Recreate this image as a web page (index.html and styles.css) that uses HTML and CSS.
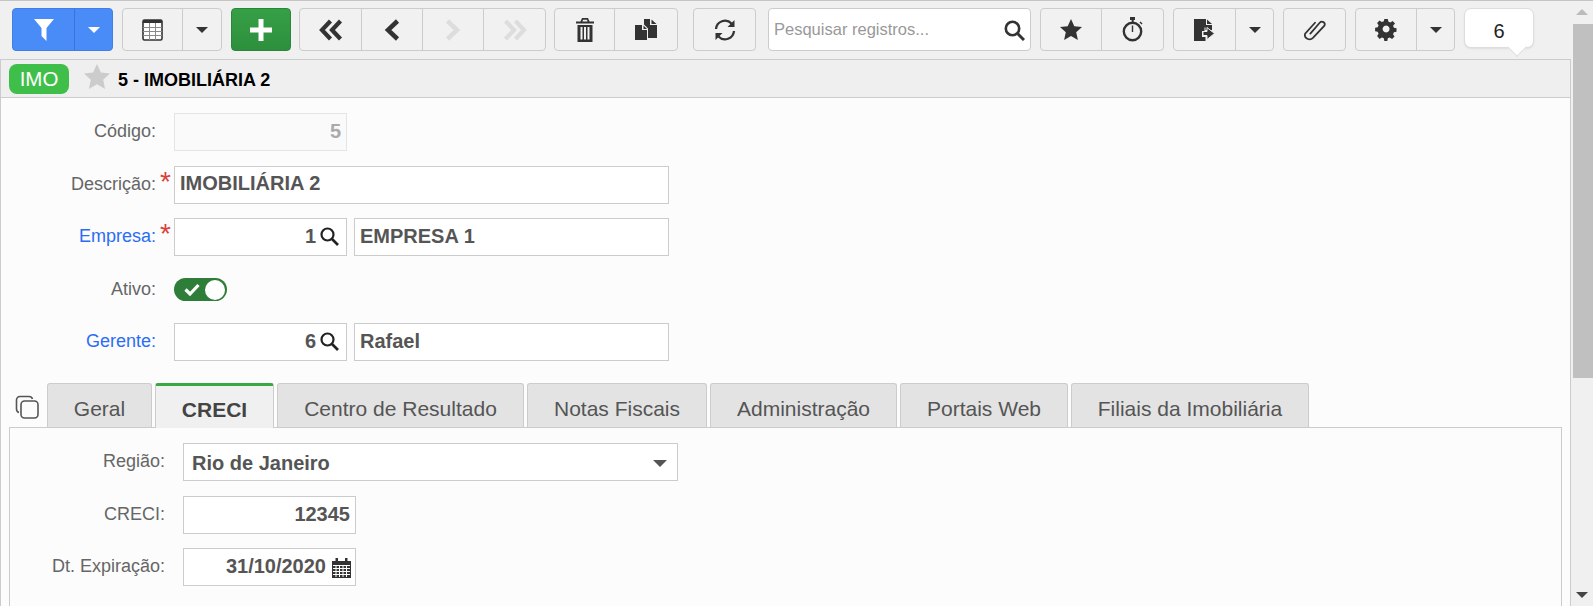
FILE: index.html
```html
<!DOCTYPE html>
<html lang="pt-BR">
<head>
<meta charset="utf-8">
<title>Imobiliária</title>
<link rel="stylesheet" href="styles.css">
</head>
<body>
<div class="app">
  <div class="main">
    <div class="toolbar">
      <div class="group blue">
        <button class="btn w62"><svg width="20" height="22" viewBox="0 0 20 22"><path fill="#fff" d="M0 0H20L12.5 9V22L7.5 17V9Z"/></svg></button>
        <button class="btn w37"><span class="caret white"></span></button>
      </div>
      <div class="group">
        <button class="btn w60"><svg width="21" height="22" viewBox="0 0 21 22"><rect x="1" y="1" width="19" height="20" rx="1.5" fill="#fff" stroke="#333" stroke-width="1.6"/><path fill="#333" d="M1 1h19v3H1z"/><path stroke="#8a8a8a" stroke-width="1" fill="none" d="M1 8.500h19M1 12.500h19M1 16.500h19M7.500 4v17M13.500 4v17"/></svg></button>
        <button class="btn w38"><span class="caret"></span></button>
      </div>
      <div class="group green">
        <button class="btn w58"><svg width="22" height="22" viewBox="0 0 22 22"><path fill="#fff" d="M8.500 0h5v8.500H22v5h-8.500V22h-5v-8.500H0v-5h8.500z"/></svg></button>
      </div>
      <div class="group narrow">
        <button class="btn w62"><svg width="24" height="22" viewBox="0 0 24 22"><path fill="none" stroke="#333" stroke-width="4.200" d="M11.500 2L3 11l8.500 9M21.500 2L13 11l8.500 9"/></svg></button>
        <button class="btn w61"><svg width="16" height="22" viewBox="0 0 16 22"><path fill="none" stroke="#333" stroke-width="4.500" d="M13.500 2L4 11l9.500 9"/></svg></button>
        <button class="btn w61"><svg width="16" height="22" viewBox="0 0 16 22"><path fill="none" stroke="#ddd" stroke-width="4.500" d="M2.500 2L12 11l-9.500 9"/></svg></button>
        <button class="btn w61"><svg width="24" height="22" viewBox="0 0 24 22"><path fill="none" stroke="#ddd" stroke-width="4.200" d="M2.500 2L11 11l-8.500 9M12.500 2L21 11l-8.500 9"/></svg></button>
      </div>
      <div class="group narrow">
        <button class="btn w60"><svg width="18" height="24" viewBox="0 0 18 24"><path fill="#333" d="M6 0h6l1.500 3.500H18v2H0v-2h4.500zM6.500 3.500h5L11 1.700H7zM1.500 7h15v17h-15zM4.500 9v12.500h2V9zM8 9v12.500h2V9zM11.500 9v12.500h2V9z" fill-rule="evenodd"/></svg></button>
        <button class="btn w62"><svg width="22" height="21" viewBox="0 0 22 21"><path fill="#333" d="M0 6h7v5h5v10H0zM8.500 6.500L12 10H8.500zM9 0h6v6h7v13h-9v-9.500L9 5.500zM16.500 0.500L21.500 5h-5z"/></svg></button>
      </div>
      <div class="group wide">
        <button class="btn w61"><svg width="22" height="22" viewBox="0 0 22 22"><g fill="none" stroke="#333" stroke-width="2.300"><path d="M2 10A9 9 0 0 1 17.500 4.500"/><path d="M20 12A9 9 0 0 1 4.500 17.500"/></g><path fill="#333" d="M20.500 1v7h-7zM1.500 21v-7h7z"/></svg></button>
      </div>
      <div class="search">
        <span class="placeholder">Pesquisar registros...</span>
        <svg class="glass" width="21" height="21" viewBox="0 0 21 21"><circle cx="8.500" cy="8.500" r="6.700" fill="none" stroke="#333" stroke-width="2.600"/><path stroke="#333" stroke-width="3" d="M13.500 13.500L20 20"/></svg>
      </div>
      <div class="group">
        <button class="btn w61"><svg width="22" height="21" viewBox="0 0 22 21"><path fill="#333" d="M11 0l3.300 7.200 7.700.8-5.800 5.200 1.700 7.800-6.900-4-6.900 4 1.700-7.800L0 8l7.700-.8z"/></svg></button>
        <button class="btn w61"><svg width="22" height="25" viewBox="0 0 22 25"><circle cx="10.500" cy="14.500" r="8.700" fill="none" stroke="#333" stroke-width="2.400"/><path fill="#333" d="M8 0h5v3H8zM9.700 3h2v3h-2zM9.800 8.500h1.400L11.200 15H9.800zM18.500 4.500l2 2-1 1-2-2z"/></svg></button>
      </div>
      <div class="group">
        <button class="btn w62"><svg width="21" height="22" viewBox="0 0 21 22"><path fill="#333" d="M0 0h12v6h6v5h-6.500V8.500l-1 0V12H8v6h3.500v4H0z"/><path fill="#333" d="M13 .5L18 5h-5z"/><path fill="#333" stroke="#f1f1f1" stroke-width="1" d="M9 12.500h4V8.500l7.500 6-7.500 6v-4H9z"/></svg></button>
        <button class="btn w37"><span class="caret"></span></button>
      </div>
      <div class="group">
        <button class="btn w61"><svg width="25" height="23" viewBox="0 0 24 22"><path fill="none" stroke="#333" stroke-width="1.700" stroke-linecap="round" d="M8 15L17 4.500c2-2.300 6-0.200 4.500 2.800L10.500 19c-3 3-9 .5-7.500-4L12.500 4.500"/></svg></button>
      </div>
      <div class="group">
        <button class="btn w61"><svg width="22" height="22" viewBox="0 0 22 22"><path fill="#333" fill-rule="evenodd" d="M9 0h4l.6 3 2.300 1 2.600-1.700 2.800 2.800L19 7.700l1 2.300 3 .6v4l-3 .6-1 2.300 1.700 2.600-2.800 2.800-2.600-1.700-2.300 1-.6 3H9l-.6-3-2.300-1-2.600 1.700L.7 19.500 2.400 17l-1-2.300-3-.6v-4l3-.6 1-2.300L.7 4.600l2.800-2.800L6.100 3.500 8.400 2.500zM11 7.500a4 4 0 1 0 .01 0z" transform="translate(1.500 0) scale(.87)"/></svg></button>
        <button class="btn w37"><span class="caret"></span></button>
      </div>
      <div class="badge">6</div>
    </div>

    <div class="panel">
      <div class="titlebar">
        <span class="tag">IMO</span>
        <svg class="fav" width="26" height="25" viewBox="0 0 26 25"><path fill="#ccc" d="M13 0l3.900 8.500 9.100 1-6.800 6.200 1.900 9.300-8.100-4.700-8.100 4.700 1.900-9.300L0 9.500l9.100-1z"/></svg>
        <span class="title">5 - IMOBILIÁRIA 2</span>
      </div>

      <div class="form">
        <div class="row">
          <label class="label">Código:</label><span class="req"></span>
          <div class="field w173 disabled num">5</div>
        </div>
        <div class="row">
          <label class="label">Descrição:</label><span class="req">*</span>
          <div class="field w495">IMOBILIÁRIA 2</div>
        </div>
        <div class="row">
          <label class="label link">Empresa:</label><span class="req">*</span>
          <div class="field w173 num lookup">1<svg class="lens" width="19" height="19" viewBox="0 0 19 19"><circle cx="7.500" cy="7.500" r="6" fill="none" stroke="#222" stroke-width="2.200"/><path stroke="#222" stroke-width="2.600" d="M12 12l6 6"/></svg></div>
          <div class="field w315">EMPRESA 1</div>
        </div>
        <div class="row">
          <label class="label">Ativo:</label><span class="req"></span>
          <div class="toggle"><svg width="16" height="13" viewBox="0 0 16 13"><path fill="none" stroke="#fff" stroke-width="3.200" d="M1.500 6.500l4.500 4.500 8.500-9"/></svg><span class="knob"></span></div>
        </div>
        <div class="row">
          <label class="label link">Gerente:</label><span class="req"></span>
          <div class="field w173 num lookup">6<svg class="lens" width="19" height="19" viewBox="0 0 19 19"><circle cx="7.500" cy="7.500" r="6" fill="none" stroke="#222" stroke-width="2.200"/><path stroke="#222" stroke-width="2.600" d="M12 12l6 6"/></svg></div>
          <div class="field w315">Rafael</div>
        </div>
      </div>

      <div class="tabs">
        <svg class="copy" width="24" height="24" viewBox="0 0 24 24"><g fill="none" stroke="#555" stroke-width="1.600"><path d="M4 17.500C2.200 17 1.500 16 1.500 14V5C1.500 3 3 1.500 5 1.500h9c2 0 3 .7 3.500 2.500"/><rect x="6" y="6" width="17" height="17" rx="3.500"/></g></svg>
        <div class="tab t105">Geral</div>
        <div class="tab active t119">CRECI</div>
        <div class="tab t247">Centro de Resultado</div>
        <div class="tab t180">Notas Fiscais</div>
        <div class="tab t187">Administração</div>
        <div class="tab t168">Portais Web</div>
        <div class="tab t238">Filiais da Imobiliária</div>
      </div>
      <div class="tabpane">
        <div class="row sub">
          <label class="label">Região:</label>
          <div class="field w495 select">Rio de Janeiro<span class="caret grey"></span></div>
        </div>
        <div class="row sub">
          <label class="label">CRECI:</label>
          <div class="field w173 num">12345</div>
        </div>
        <div class="row sub">
          <label class="label">Dt. Expiração:</label>
          <div class="field w173 num date">31/10/2020<svg class="lens cal" width="19" height="20" viewBox="0 0 19 20"><path fill="#333" d="M0 3h3.500V0h2.500v3h7V0h2.500v3H19v17H0z"/><path stroke="#fff" stroke-width="1" fill="none" d="M1 7.500h17M1 10.500h17M1 13.500h17M1 16.500h17M4 7v12M7.500 7v12M11 7v12M14.500 7v12"/></svg></div>
        </div>
      </div>
    </div>
  </div>
  <div class="scrollbar">
    <span class="arrow up"></span>
    <span class="thumb"></span>
    <span class="arrow down"></span>
  </div>
</div>
</body>
</html>
```

FILE: styles.css
```css
* { box-sizing: border-box; }
html, body { margin: 0; height: 100%; overflow: hidden; }
body { font-family: "Liberation Sans", Arial, sans-serif; background: #f0f0f0; color: #555; }

.app { display: flex; height: 606px; border-top: 1px solid #c4c4c4; }
.main { width: 1571px; flex: none; display: flex; flex-direction: column; }

.toolbar { height: 58px; flex: none; display: flex; align-items: flex-start; gap: 9px; padding: 7px 0 0 12px; position: relative; }
.group { display: flex; height: 43px; border: 1px solid #ccc; border-radius: 4px; background: #f1f1f1; flex: none; overflow: hidden; }
.group.narrow { margin-left: -1px; }
.group.wide { margin-left: 6px; }
.btn { height: 100%; padding: 0; margin: 0; border: 0; border-right: 1px solid #ccc; background: transparent; display: flex; align-items: center; justify-content: center; flex: none; }
.btn:last-child { border-right: 0; }
.w37 { width: 37px; } .w38 { width: 38px; } .w58 { width: 58px; } .w60 { width: 60px; } .w61 { width: 61px; } .w62 { width: 62px; }
.blue { background: #4a8cf7; border-color: #3f7fe6; }
.blue .btn { border-right-color: #3a74d6; }
.green { background: linear-gradient(#36a046, #2d8f3d); border-color: #2a8639; }
.caret { width: 0; height: 0; border-left: 6px solid transparent; border-right: 6px solid transparent; border-top: 6px solid #333; display: block; }
.caret.white { border-top-color: #fff; }
.caret.grey { border-top-color: #555; border-left-width: 7px; border-right-width: 7px; border-top-width: 7px; }

.search { width: 263px; height: 43px; flex: none; margin-left: 3px; background: #fff; border: 1px solid #ccc; border-radius: 4px; display: flex; align-items: center; justify-content: space-between; padding: 0 5px; }
.placeholder { font-size: 16.500px; color: #999; }
.glass { display: block; margin-top: 2px; }

.badge { width: 70px; height: 40px; flex: none; background: #fff; border: 1px solid #ddd; border-radius: 7px; font-size: 20px; color: #222; text-align: center; line-height: 44px; position: relative; box-shadow: 0 1px 2px rgba(0,0,0,.08); }
.badge::after { content: ""; position: absolute; left: 45px; bottom: -7px; width: 13px; height: 13px; background: #fff; border-right: 1px solid #ddd; border-bottom: 1px solid #ddd; transform: rotate(45deg); }

.panel { flex: 1; min-height: 0; border: 1px solid #ccc; border-bottom: 0; background: #fcfcfc; overflow: hidden; }
.titlebar { height: 38px; background: #efefef; border-bottom: 1px solid #ccc; display: flex; align-items: center; padding-left: 8px; }
.tag { width: 60px; height: 30px; background: #3fbf4a; border-radius: 8px; color: #fff; font-size: 20.500px; line-height: 30px; text-align: center; }
.fav { margin-left: 15px; margin-top: -4px; }
.title { margin-left: 8px; font-size: 18px; font-weight: 700; color: #000; margin-top: 4px; }

.form { display: flex; flex-direction: column; gap: 14.500px; padding: 15px 0 0 0; }
.form .field { padding-bottom: 2px; }
.row { display: flex; height: 38px; align-items: center; }
.label { width: 155px; flex: none; text-align: right; font-size: 18px; color: #666; margin-top: -1px; }
.label.link { color: #2a6df4; }
.req { width: 18px; flex: none; color: #d9403a; font-size: 28px; font-weight: 400; line-height: 1; height: 28px; padding-left: 4px; margin-top: -6px; }
.field { height: 38px; background: #fff; border: 1px solid #ccc; font-size: 20px; font-weight: 700; color: #555; display: flex; align-items: center; padding: 0 5px; flex: none; }
.w173 { width: 173px; }
.w495 { width: 495px; }
.w315 { width: 315px; margin-left: 7px; }
.num { justify-content: flex-end; }
.lookup { padding-right: 7px; }
.disabled { background: #fafafa; border-color: #e4e4e4; color: #aaa; }
.lens { margin-left: 4px; flex: none; }
.lens.cal { margin-left: 6px; }
.date { padding-right: 4px; padding-bottom: 2px; }
.date .cal { margin-top: 3px; }
.toggle { width: 53px; height: 23px; border-radius: 12px; background: #2e7d39; display: flex; align-items: center; justify-content: space-between; padding: 0 2px 0 10px; }
.knob { width: 20px; height: 20px; border-radius: 50%; background: #fff; }

.tabs { display: flex; align-items: flex-end; height: 45px; margin-top: 21px; padding-left: 14px; position: relative; }
.copy { margin-right: 8px; align-self: center; margin-top: 4px; }
.tab { height: 44px; flex: none; margin-right: 3px; background: #e3e3e3; border: 1px solid #ccc; border-bottom: 0; border-radius: 3px 3px 0 0; font-size: 21px; color: #555; text-align: center; line-height: 50px; }
.tab.active { background: #f0f0f0; border-top: 3px solid #38a845; font-weight: 700; color: #444; line-height: 48px; margin-bottom: -1px; height: 45px; position: relative; z-index: 1; }
.t105 { width: 105px; } .t119 { width: 119px; } .t247 { width: 247px; } .t180 { width: 180px; } .t187 { width: 187px; } .t168 { width: 168px; } .t238 { width: 238px; }
.tabpane { margin: 0 8px; height: 300px; border: 1px solid #ccc; background: #fcfcfc; padding: 15px 0 0 0; display: flex; flex-direction: column; gap: 14.500px; }
.row.sub .label { margin-right: 18px; }
.select { justify-content: space-between; padding: 2px 10px 0 8px; }

.scrollbar { flex: 1; background: #f0f0f0; display: flex; flex-direction: column; align-items: stretch; position: relative; padding-left: 2px; }
.thumb { height: 354px; background: #c0c0c0; margin-top: 23px; }
.arrow { position: absolute; left: 5px; width: 0; height: 0; border-left: 6px solid transparent; border-right: 6px solid transparent; }
.arrow.up { top: 8px; border-bottom: 6px solid #bbb; }
.arrow.down { top: 591px; border-top: 6px solid #444; }
```
